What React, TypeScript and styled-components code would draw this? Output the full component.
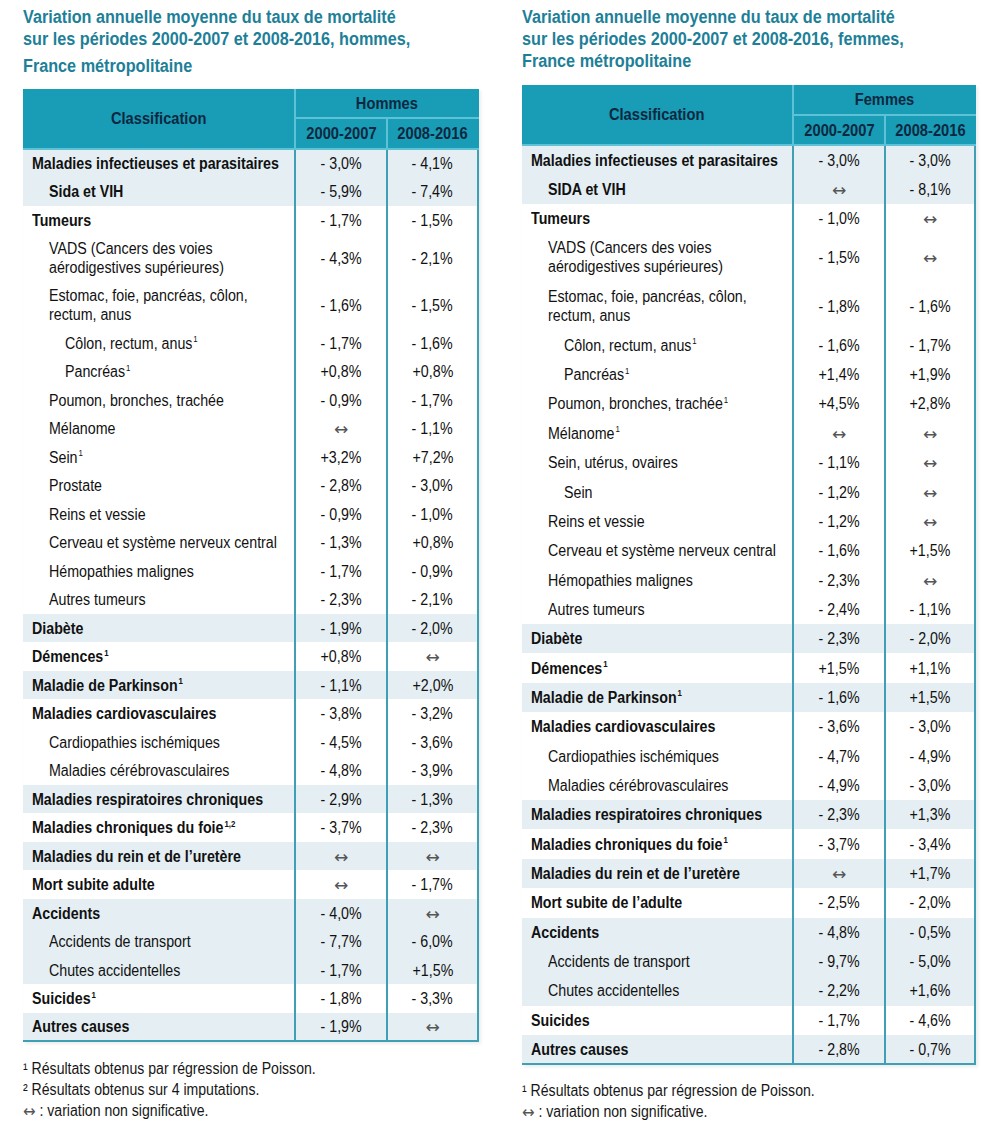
import React from "react";
import styled, { createGlobalStyle } from "styled-components";

const FONT = `"Liberation Sans", Arial, sans-serif`;
const SQUEEZE = 0.89;

const Global = createGlobalStyle`
  html, body { margin: 0; padding: 0; background: #ffffff; }
  body { font-family: ${FONT}; color: #141414; }
`;

const Page = styled.div`
  display: flex;
  align-items: flex-start;
  gap: 44px;
  padding: 6px 25px 0 23px;
  width: 1000px;
  box-sizing: border-box;
`;

const Panel = styled.section<{ $w: number }>`
  width: ${(p) => p.$w}px;
  display: flex;
  flex-direction: column;
`;

const Title = styled.h2<{ $gap: number }>`
  margin: 0 0 ${(p) => p.$gap}px 0;
  font-family: ${FONT};
  font-weight: 700;
  font-size: 18px;
  line-height: 22px;
  color: #1d8098;
`;

const TitleLine = styled.span<{ $top?: number }>`
  display: block;
  white-space: nowrap;
  margin-top: ${(p) => p.$top ?? 0}px;
  transform: scaleX(0.9);
  transform-origin: left center;
`;

/* condensed run of text (the reference uses a condensed grotesque) */
const Txt = styled.span<{ $origin?: "left" | "center" }>`
  display: inline-block;
  white-space: nowrap;
  transform: scaleX(${SQUEEZE});
  transform-origin: ${(p) => p.$origin ?? "left"} center;
`;

const Table = styled.table`
  border-collapse: collapse;
  table-layout: fixed;
  width: 100%;
  font-family: ${FONT};
  box-shadow: 2px 2px 3px rgba(0, 0, 0, 0.08);
`;

const HeadCell = styled.th<{ $h?: number }>`
  background: #199cb6;
  color: #0c2840;
  font-weight: 700;
  font-size: 16.5px;
  text-align: center;
  padding: 0;
  height: ${(p) => p.$h ?? 28}px;
  border: 2px solid #5ec2d6;
  border-top: none;
  &:first-child { border-left: none; }
  &:last-child { border-right: 2px solid #199cb6; }
`;

const BodyRow = styled.tr<{ $shaded: boolean; $h: number }>`
  background: ${(p) => (p.$shaded ? "#e4eef3" : "#ffffff")};
  height: ${(p) => p.$h}px;
  &:last-child td { border-bottom: 2px solid #3f9fb5; }
`;

const LabelCell = styled.td<{ $level: number; $bold: boolean; $fs: number }>`
  padding: 0 4px 0 ${(p) => 9 + p.$level * 16.5}px;
  font-size: ${(p) => p.$fs}px;
  line-height: ${(p) => p.$fs + 3}px;
  font-weight: ${(p) => (p.$bold ? 700 : 400)};
  border-right: 2px solid #3f9fb5;
  vertical-align: middle;
  color: #111;
`;

const ValueCell = styled.td<{ $fs: number }>`
  text-align: center;
  font-size: ${(p) => p.$fs}px;
  line-height: ${(p) => p.$fs + 3}px;
  border-right: 2px solid #3f9fb5;
  vertical-align: middle;
  padding: 0;
  color: #111;
`;

const Arrow = styled.span`
  font-family: "DejaVu Sans", sans-serif;
  font-size: 17px;
  line-height: 0;
  font-weight: 400;
  color: #555;
  vertical-align: -1px;
`;

const Sup = styled.sup`
  font-size: 0.55em;
  line-height: 0;
  vertical-align: 0.75em;
  margin-left: 1px;
`;

const Notes = styled.div<{ $top: number }>`
  margin-top: ${(p) => p.$top}px;
  font-size: 16px;
  line-height: 21px;
  color: #161616;
`;

const Note = styled.div`
  white-space: nowrap;
  transform: scaleX(0.88);
  transform-origin: left center;
`;

type Row = {
  label: string[];
  sup?: string;
  level: number;
  bold?: boolean;
  a: string;
  b: string;
  group: number;
};

const A = "↔";

const hommes: Row[] = [
  { label: ["Maladies infectieuses et parasitaires"], level: 0, bold: true, a: "- 3,0%", b: "- 4,1%", group: 0 },
  { label: ["Sida et VIH"], level: 1, bold: true, a: "- 5,9%", b: "- 7,4%", group: 0 },
  { label: ["Tumeurs"], level: 0, bold: true, a: "- 1,7%", b: "- 1,5%", group: 1 },
  { label: ["VADS (Cancers des voies", "aérodigestives supérieures)"], level: 1, a: "- 4,3%", b: "- 2,1%", group: 1 },
  { label: ["Estomac, foie, pancréas, côlon,", "rectum, anus"], level: 1, a: "- 1,6%", b: "- 1,5%", group: 1 },
  { label: ["Côlon, rectum, anus"], sup: "1", level: 2, a: "- 1,7%", b: "- 1,6%", group: 1 },
  { label: ["Pancréas"], sup: "1", level: 2, a: "+0,8%", b: "+0,8%", group: 1 },
  { label: ["Poumon, bronches, trachée"], level: 1, a: "- 0,9%", b: "- 1,7%", group: 1 },
  { label: ["Mélanome"], level: 1, a: A, b: "- 1,1%", group: 1 },
  { label: ["Sein"], sup: "1", level: 1, a: "+3,2%", b: "+7,2%", group: 1 },
  { label: ["Prostate"], level: 1, a: "- 2,8%", b: "- 3,0%", group: 1 },
  { label: ["Reins et vessie"], level: 1, a: "- 0,9%", b: "- 1,0%", group: 1 },
  { label: ["Cerveau et système nerveux central"], level: 1, a: "- 1,3%", b: "+0,8%", group: 1 },
  { label: ["Hémopathies malignes"], level: 1, a: "- 1,7%", b: "- 0,9%", group: 1 },
  { label: ["Autres tumeurs"], level: 1, a: "- 2,3%", b: "- 2,1%", group: 1 },
  { label: ["Diabète"], level: 0, bold: true, a: "- 1,9%", b: "- 2,0%", group: 2 },
  { label: ["Démences"], sup: "1", level: 0, bold: true, a: "+0,8%", b: A, group: 3 },
  { label: ["Maladie de Parkinson"], sup: "1", level: 0, bold: true, a: "- 1,1%", b: "+2,0%", group: 4 },
  { label: ["Maladies cardiovasculaires"], level: 0, bold: true, a: "- 3,8%", b: "- 3,2%", group: 5 },
  { label: ["Cardiopathies ischémiques"], level: 1, a: "- 4,5%", b: "- 3,6%", group: 5 },
  { label: ["Maladies cérébrovasculaires"], level: 1, a: "- 4,8%", b: "- 3,9%", group: 5 },
  { label: ["Maladies respiratoires chroniques"], level: 0, bold: true, a: "- 2,9%", b: "- 1,3%", group: 6 },
  { label: ["Maladies chroniques du foie"], sup: "1,2", level: 0, bold: true, a: "- 3,7%", b: "- 2,3%", group: 7 },
  { label: ["Maladies du rein et de l’uretère"], level: 0, bold: true, a: A, b: A, group: 8 },
  { label: ["Mort subite adulte"], level: 0, bold: true, a: A, b: "- 1,7%", group: 9 },
  { label: ["Accidents"], level: 0, bold: true, a: "- 4,0%", b: A, group: 10 },
  { label: ["Accidents de transport"], level: 1, a: "- 7,7%", b: "- 6,0%", group: 10 },
  { label: ["Chutes accidentelles"], level: 1, a: "- 1,7%", b: "+1,5%", group: 10 },
  { label: ["Suicides"], sup: "1", level: 0, bold: true, a: "- 1,8%", b: "- 3,3%", group: 11 },
  { label: ["Autres causes"], level: 0, bold: true, a: "- 1,9%", b: A, group: 12 },
];

const femmes: Row[] = [
  { label: ["Maladies infectieuses et parasitaires"], level: 0, bold: true, a: "- 3,0%", b: "- 3,0%", group: 0 },
  { label: ["SIDA et VIH"], level: 1, bold: true, a: A, b: "- 8,1%", group: 0 },
  { label: ["Tumeurs"], level: 0, bold: true, a: "- 1,0%", b: A, group: 1 },
  { label: ["VADS (Cancers des voies", "aérodigestives supérieures)"], level: 1, a: "- 1,5%", b: A, group: 1 },
  { label: ["Estomac, foie, pancréas, côlon,", "rectum, anus"], level: 1, a: "- 1,8%", b: "- 1,6%", group: 1 },
  { label: ["Côlon, rectum, anus"], sup: "1", level: 2, a: "- 1,6%", b: "- 1,7%", group: 1 },
  { label: ["Pancréas"], sup: "1", level: 2, a: "+1,4%", b: "+1,9%", group: 1 },
  { label: ["Poumon, bronches, trachée"], sup: "1", level: 1, a: "+4,5%", b: "+2,8%", group: 1 },
  { label: ["Mélanome"], sup: "1", level: 1, a: A, b: A, group: 1 },
  { label: ["Sein, utérus, ovaires"], level: 1, a: "- 1,1%", b: A, group: 1 },
  { label: ["Sein"], level: 2, a: "- 1,2%", b: A, group: 1 },
  { label: ["Reins et vessie"], level: 1, a: "- 1,2%", b: A, group: 1 },
  { label: ["Cerveau et système nerveux central"], level: 1, a: "- 1,6%", b: "+1,5%", group: 1 },
  { label: ["Hémopathies malignes"], level: 1, a: "- 2,3%", b: A, group: 1 },
  { label: ["Autres tumeurs"], level: 1, a: "- 2,4%", b: "- 1,1%", group: 1 },
  { label: ["Diabète"], level: 0, bold: true, a: "- 2,3%", b: "- 2,0%", group: 2 },
  { label: ["Démences"], sup: "1", level: 0, bold: true, a: "+1,5%", b: "+1,1%", group: 3 },
  { label: ["Maladie de Parkinson"], sup: "1", level: 0, bold: true, a: "- 1,6%", b: "+1,5%", group: 4 },
  { label: ["Maladies cardiovasculaires"], level: 0, bold: true, a: "- 3,6%", b: "- 3,0%", group: 5 },
  { label: ["Cardiopathies ischémiques"], level: 1, a: "- 4,7%", b: "- 4,9%", group: 5 },
  { label: ["Maladies cérébrovasculaires"], level: 1, a: "- 4,9%", b: "- 3,0%", group: 5 },
  { label: ["Maladies respiratoires chroniques"], level: 0, bold: true, a: "- 2,3%", b: "+1,3%", group: 6 },
  { label: ["Maladies chroniques du foie"], sup: "1", level: 0, bold: true, a: "- 3,7%", b: "- 3,4%", group: 7 },
  { label: ["Maladies du rein et de l’uretère"], level: 0, bold: true, a: A, b: "+1,7%", group: 8 },
  { label: ["Mort subite de l’adulte"], level: 0, bold: true, a: "- 2,5%", b: "- 2,0%", group: 9 },
  { label: ["Accidents"], level: 0, bold: true, a: "- 4,8%", b: "- 0,5%", group: 10 },
  { label: ["Accidents de transport"], level: 1, a: "- 9,7%", b: "- 5,0%", group: 10 },
  { label: ["Chutes accidentelles"], level: 1, a: "- 2,2%", b: "+1,6%", group: 10 },
  { label: ["Suicides"], level: 0, bold: true, a: "- 1,7%", b: "- 4,6%", group: 11 },
  { label: ["Autres causes"], level: 0, bold: true, a: "- 2,8%", b: "- 0,7%", group: 12 },
];

const Value = ({ v }: { v: string }) =>
  v === A ? <Arrow>{A}</Arrow> : <Txt $origin="center">{v}</Txt>;

type TableProps = {
  sex: string;
  rows: Row[];
  rowH: number;
  tallH: number;
  fs: number;
  head1: number;
  head2: number;
  cols: [number, number, number];
};

const DataTable = ({ sex, rows, rowH, tallH, fs, head1, head2, cols }: TableProps) => (
  <Table>
    <colgroup>
      <col style={{ width: cols[0] }} />
      <col style={{ width: cols[1] }} />
      <col style={{ width: cols[2] }} />
    </colgroup>
    <thead>
      <tr>
        <HeadCell rowSpan={2} $h={head1}>
          <Txt $origin="center">Classification</Txt>
        </HeadCell>
        <HeadCell colSpan={2} $h={head1}>
          <Txt $origin="center">{sex}</Txt>
        </HeadCell>
      </tr>
      <tr>
        <HeadCell $h={head2}>
          <Txt $origin="center">2000-2007</Txt>
        </HeadCell>
        <HeadCell $h={head2}>
          <Txt $origin="center">2008-2016</Txt>
        </HeadCell>
      </tr>
    </thead>
    <tbody>
      {rows.map((r, i) => (
        <BodyRow key={i} $shaded={r.group % 2 === 0} $h={r.label.length > 1 ? tallH : rowH}>
          <LabelCell $level={r.level} $bold={!!r.bold} $fs={fs}>
            <Txt>
              {r.label.map((l, j) => (
                <React.Fragment key={j}>
                  {j > 0 && <br />}
                  {l}
                </React.Fragment>
              ))}
              {r.sup && <Sup>{r.sup}</Sup>}
            </Txt>
          </LabelCell>
          <ValueCell $fs={fs}>
            <Value v={r.a} />
          </ValueCell>
          <ValueCell $fs={fs}>
            <Value v={r.b} />
          </ValueCell>
        </BodyRow>
      ))}
    </tbody>
  </Table>
);

export default function App() {
  return (
    <>
      <Global />
      <Page>
        <Panel $w={455}>
          <Title $gap={12}>
            <TitleLine>Variation annuelle moyenne du taux de mortalité</TitleLine>
            <TitleLine>sur les périodes 2000-2007 et 2008-2016, hommes,</TitleLine>
            <TitleLine $top={5}>France métropolitaine</TitleLine>
          </Title>
          <DataTable
            sex="Hommes"
            rows={hommes}
            rowH={28.5}
            tallH={47.2}
            fs={16}
            head1={28}
            head2={29}
            cols={[272, 92, 91]}
          />
          <Notes $top={16}>
            <Note>¹ Résultats obtenus par régression de Poisson.</Note>
            <Note>² Résultats obtenus sur 4 imputations.</Note>
            <Note>
              <Arrow>↔</Arrow> : variation non significative.
            </Note>
          </Notes>
        </Panel>
        <Panel $w={453}>
          <Title $gap={13}>
            <TitleLine>Variation annuelle moyenne du taux de mortalité</TitleLine>
            <TitleLine>sur les périodes 2000-2007 et 2008-2016, femmes,</TitleLine>
            <TitleLine>France métropolitaine</TitleLine>
          </Title>
          <DataTable
            sex="Femmes"
            rows={femmes}
            rowH={29.35}
            tallH={48.8}
            fs={16}
            head1={29}
            head2={28}
            cols={[271, 92, 90]}
          />
          <Notes $top={15}>
            <Note>¹ Résultats obtenus par régression de Poisson.</Note>
            <Note>
              <Arrow>↔</Arrow> : variation non significative.
            </Note>
          </Notes>
        </Panel>
      </Page>
    </>
  );
}
